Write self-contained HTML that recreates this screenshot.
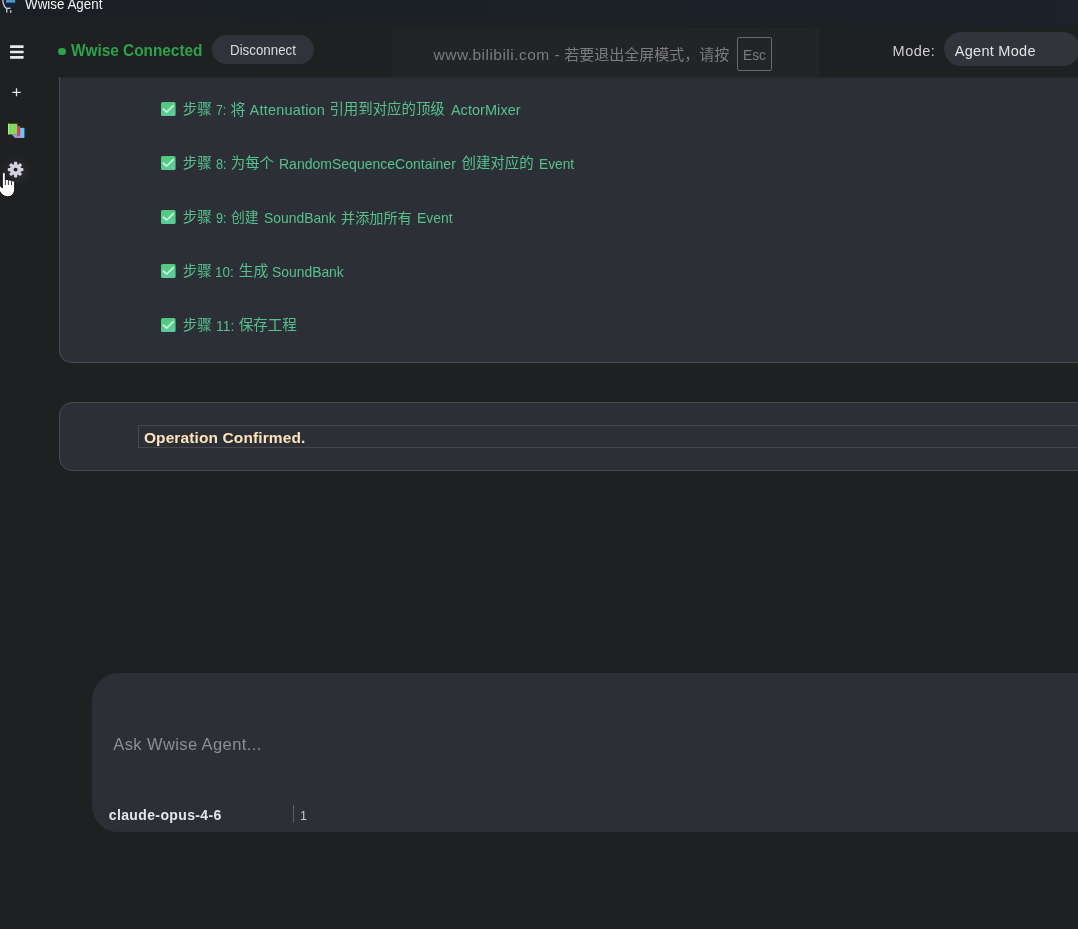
<!DOCTYPE html>
<html lang="zh">
<head>
<meta charset="utf-8">
<title>Wwise Agent</title>
<style>
html,body{margin:0;padding:0;}
html{overflow:hidden;background:#1f2022;}
body{width:1078px;height:929px;overflow:hidden;position:relative;background:#1f2022;
  font-family:"Liberation Sans","Noto Sans CJK SC",sans-serif;}
.a{position:absolute;display:block;}
.t{position:absolute;white-space:pre;line-height:1;font-weight:400;transform-origin:0 50%;}
#titlebar{left:0;top:0;width:1078px;height:40px;background:linear-gradient(to right,#1b1f24 0,#1b2026 35%,#1b2229 100%);}
#tbfade{left:0;top:0;width:1078px;height:40px;background:linear-gradient(180.43deg,rgba(31,32,34,0) 0,rgba(31,32,34,0) 47%,rgba(31,32,34,.6) 57%,#1f2022 67%);}
#overlay{left:392px;top:28px;width:427px;height:49px;background:#232428;}
#esc{left:737px;top:37px;width:35px;height:34px;border:1px solid #67686b;border-radius:2px;box-sizing:border-box;}
#disc{left:212px;top:35px;width:101.5px;height:29px;border-radius:14.5px;background:#30333a;}
#mode{left:944px;top:32px;width:136px;height:34px;border-radius:17px;background:#31343a;}
#dot{left:58.3px;top:47.5px;width:7.4px;height:7.4px;border-radius:50%;background:#2da24c;}
#p1{left:59px;top:77px;width:1060px;height:286px;background:#2c2f35;border:1px solid #484b51;border-top:none;
  border-radius:0 0 0 13px;box-sizing:border-box;}
#p2{left:59px;top:402.4px;width:1060px;height:68.6px;background:#2c2f35;border:1px solid #484b51;
  border-radius:13px 0 0 13px;box-sizing:border-box;}
#p2in{left:138px;top:424.8px;width:980px;height:23.6px;border:1px solid #45484e;box-sizing:border-box;background:#2c2f35;}
#inp{left:92px;top:672.5px;width:1040px;height:159.5px;background:#2c2f36;border-radius:27px 0 0 26px;}
#p1sh{left:60px;top:77px;width:1018px;height:3px;background:linear-gradient(rgba(31,32,34,.5),rgba(31,32,34,0));}
#sep{left:293.4px;top:805px;width:1px;height:18px;background:#5b5e64;}
#txt{left:0;top:0;width:1078px;height:929px;will-change:transform;}
#hov{left:1px;top:155px;width:31px;height:32px;background:radial-gradient(closest-side,#28292d 0,#26272b 55%,rgba(31,32,34,0) 100%);}
</style>
</head>
<body>
<svg class="a" width="0" height="0"><defs>
<linearGradient id="cg" x1="0" y1="0" x2="0.25" y2="1"><stop offset="0" stop-color="#50c878"/><stop offset="1" stop-color="#5ccb9b"/></linearGradient>
</defs></svg>

<!-- window title bar -->
<div class="a" id="titlebar"></div>
<div class="a" id="tbfade"></div>
<svg class="a" style="left:0;top:0" width="18" height="15" viewBox="0 0 18 15">
  <rect x="6" y="0" width="9.2" height="2.8" fill="#4d94c8"/>
  <rect x="6.4" y="2.8" width="8.4" height="4" fill="#10243f"/>
  <path d="M2.7 -1 C3 4 4.2 7 6.6 8.4 L10 8.2" fill="none" stroke="#c6c7d1" stroke-width="1.4" stroke-linecap="round"/>
  <path d="M6.7 8.6 L6.8 12" fill="none" stroke="#c6c7d1" stroke-width="1.4" stroke-linecap="round"/>
  <path d="M10.7 10.8 V12.2" fill="none" stroke="#b9bac4" stroke-width="1.5" stroke-linecap="round"/>
</svg>

<!-- header controls -->
<div class="a" id="overlay"></div>
<div class="a" id="esc"></div>
<div class="a" id="disc"></div>
<div class="a" id="mode"></div>
<div class="a" id="dot"></div>

<!-- sidebar -->
<svg class="a" style="left:10px;top:45px" width="14" height="14.4" viewBox="0 0 14 14.4">
  <rect x="0" y="0.3" width="13.6" height="2.6" rx="0.5" fill="#e8e8ea"/>
  <rect x="0" y="5.7" width="13.6" height="2.6" rx="0.5" fill="#e8e8ea"/>
  <rect x="0" y="11.1" width="13.6" height="2.6" rx="0.5" fill="#e8e8ea"/>
</svg>
<svg class="a" style="left:11px;top:87px" width="11" height="11" viewBox="0 0 11 11">
  <path d="M5.5 1.3 V9.3 M1.3 5.3 H9.7" stroke="#e4e4e6" stroke-width="1.3" fill="none"/>
</svg>
<!-- books -->
<svg class="a" style="left:6px;top:121px" width="22" height="19" viewBox="6 121 22 19">
  <path d="M11.5 134.3 L24.4 134.3 L24.4 138 L15 138 Z" fill="#a58fd8"/>
  <rect x="24" y="127.6" width="1.5" height="10.4" fill="#0b2b55"/>
  <rect x="20" y="127.8" width="4.4" height="9.6" fill="#6ec6f0"/>
  <rect x="17.2" y="126" width="3" height="9.8" fill="#d93d5e"/>
  <rect x="8" y="123.7" width="9.3" height="10.7" fill="#86d75e"/>
  <rect x="8" y="123.7" width="0.9" height="10.7" fill="#bfe6a0"/>
</svg>
<!-- settings (hovered) -->
<div class="a" id="hov"></div>
<svg class="a" style="left:7.4px;top:161.4px" width="17.2" height="17.2" viewBox="-9 -9 18 18">
  <g fill="#d3d1de">
    <circle r="5.9"/>
    <g id="teeth">
      <rect x="-1.7" y="-8.2" width="3.4" height="4" rx="1"/>
      <rect x="-1.7" y="-8.2" width="3.4" height="4" rx="1" transform="rotate(45)"/>
      <rect x="-1.7" y="-8.2" width="3.4" height="4" rx="1" transform="rotate(90)"/>
      <rect x="-1.7" y="-8.2" width="3.4" height="4" rx="1" transform="rotate(135)"/>
      <rect x="-1.7" y="-8.2" width="3.4" height="4" rx="1" transform="rotate(180)"/>
      <rect x="-1.7" y="-8.2" width="3.4" height="4" rx="1" transform="rotate(225)"/>
      <rect x="-1.7" y="-8.2" width="3.4" height="4" rx="1" transform="rotate(270)"/>
      <rect x="-1.7" y="-8.2" width="3.4" height="4" rx="1" transform="rotate(315)"/>
    </g>
  </g>
  <circle r="2" fill="#1d1b2c"/>
</svg>

<!-- conversation panels -->
<div class="a" id="p1"></div>
<div class="a" id="p1sh"></div>
<div class="a" id="p2"></div>
<div class="a" id="p2in"></div>
<div class="a" id="inp"></div>
<div class="a" id="sep"></div>

<div class="a" id="txt">
<svg class="a" style="left:161.2px;top:102.3px" width="14.6" height="14" viewBox="0 0 14.6 14"><rect width="14.6" height="14" rx="1.6" fill="url(#cg)"/><path d="M2.3 7.1 L5.8 10.0 L12.3 3.6" fill="none" stroke="#c8f7dc" stroke-width="1.7" stroke-linecap="round" stroke-linejoin="round"/></svg>
<svg class="a" style="left:161.2px;top:156.3px" width="14.6" height="14" viewBox="0 0 14.6 14"><rect width="14.6" height="14" rx="1.6" fill="url(#cg)"/><path d="M2.3 7.1 L5.8 10.0 L12.3 3.6" fill="none" stroke="#c8f7dc" stroke-width="1.7" stroke-linecap="round" stroke-linejoin="round"/></svg>
<svg class="a" style="left:161.2px;top:210.3px" width="14.6" height="14" viewBox="0 0 14.6 14"><rect width="14.6" height="14" rx="1.6" fill="url(#cg)"/><path d="M2.3 7.1 L5.8 10.0 L12.3 3.6" fill="none" stroke="#c8f7dc" stroke-width="1.7" stroke-linecap="round" stroke-linejoin="round"/></svg>
<svg class="a" style="left:161.2px;top:264.3px" width="14.6" height="14" viewBox="0 0 14.6 14"><rect width="14.6" height="14" rx="1.6" fill="url(#cg)"/><path d="M2.3 7.1 L5.8 10.0 L12.3 3.6" fill="none" stroke="#c8f7dc" stroke-width="1.7" stroke-linecap="round" stroke-linejoin="round"/></svg>
<svg class="a" style="left:161.2px;top:318.3px" width="14.6" height="14" viewBox="0 0 14.6 14"><rect width="14.6" height="14" rx="1.6" fill="url(#cg)"/><path d="M2.3 7.1 L5.8 10.0 L12.3 3.6" fill="none" stroke="#c8f7dc" stroke-width="1.7" stroke-linecap="round" stroke-linejoin="round"/></svg>
<span class="t" style="top:-3.27px;font-size:14.5px;color:#f3f4f6;left:24.60px;transform:scaleX(0.9233);">Wwise Agent</span>
<span class="t" style="top:43.13px;font-size:14.5px;color:#dcdcde;left:229.58px;transform:scaleX(0.9194);">Disconnect</span>
<span class="t" style="top:43.46px;font-size:16.0px;color:#2da24c;font-weight:700;left:71.30px;transform:scaleX(0.9601);">Wwise Connected</span>
<span class="t" style="top:43.53px;font-size:14.5px;color:#cfcfd1;left:892.60px;letter-spacing:0.482px;">Mode:</span>
<span class="t" style="top:43.53px;font-size:14.5px;color:#e2e2e4;left:954.80px;letter-spacing:0.275px;">Agent Mode</span>
<span class="t" style="top:46.88px;font-size:15.5px;color:#7b7c80;left:433.60px;letter-spacing:0.473px;">www.bilibili.com</span>
<span class="t" style="top:47.48px;font-size:15.5px;color:#7b7c80;left:554.60px;">-</span>
<span class="t" style="top:46.90px;font-size:15px;color:#7b7c80;left:564.35px;">若要退出全屏模式，请按</span>
<span class="t" style="top:46.88px;font-size:15.5px;color:#7b7c80;left:742.91px;transform:scaleX(0.8889);">Esc</span>
<span class="t" style="top:102.33px;font-size:14.49px;color:#56c08f;left:182.66px;">步骤</span>
<span class="t" style="top:102.73px;font-size:14.5px;color:#56c08f;left:216.20px;transform:scaleX(0.8405);">7:</span>
<span class="t" style="top:101.82px;font-size:15.1px;color:#56c08f;left:230.55px;">将</span>
<span class="t" style="top:102.73px;font-size:14.5px;color:#56c08f;left:249.60px;letter-spacing:0.190px;">Attenuation</span>
<span class="t" style="top:102.39px;font-size:14.42px;color:#56c08f;left:329.46px;">引用到对应的顶级</span>
<span class="t" style="top:102.73px;font-size:14.5px;color:#56c08f;left:450.90px;letter-spacing:0.049px;">ActorMixer</span>
<span class="t" style="top:156.33px;font-size:14.49px;color:#56c08f;left:182.66px;">步骤</span>
<span class="t" style="top:156.73px;font-size:14.5px;color:#56c08f;left:216.40px;transform:scaleX(0.8767);">8:</span>
<span class="t" style="top:156.44px;font-size:14.36px;color:#56c08f;left:230.86px;">为每个</span>
<span class="t" style="top:156.73px;font-size:14.5px;color:#56c08f;left:278.73px;transform:scaleX(0.9662);">RandomSequenceContainer</span>
<span class="t" style="top:156.36px;font-size:14.46px;color:#56c08f;left:461.46px;">创建对应的</span>
<span class="t" style="top:156.73px;font-size:14.5px;color:#56c08f;left:538.55px;transform:scaleX(0.9459);">Event</span>
<span class="t" style="top:210.33px;font-size:14.49px;color:#56c08f;left:182.66px;">步骤</span>
<span class="t" style="top:210.73px;font-size:14.5px;color:#56c08f;left:216.30px;transform:scaleX(0.8767);">9:</span>
<span class="t" style="top:210.93px;font-size:13.79px;color:#56c08f;left:231.06px;">创建</span>
<span class="t" style="top:210.73px;font-size:14.5px;color:#56c08f;left:264.30px;transform:scaleX(0.9574);">SoundBank</span>
<span class="t" style="top:210.58px;font-size:14.2px;color:#56c08f;left:340.96px;">并添加所有</span>
<span class="t" style="top:210.73px;font-size:14.5px;color:#56c08f;left:417.24px;transform:scaleX(0.9570);">Event</span>
<span class="t" style="top:264.33px;font-size:14.49px;color:#56c08f;left:182.66px;">步骤</span>
<span class="t" style="top:264.73px;font-size:14.5px;color:#56c08f;left:215.47px;transform:scaleX(0.9322);">10:</span>
<span class="t" style="top:264.11px;font-size:14.75px;color:#56c08f;left:238.65px;">生成</span>
<span class="t" style="top:264.73px;font-size:14.5px;color:#56c08f;left:271.90px;transform:scaleX(0.9574);">SoundBank</span>
<span class="t" style="top:318.33px;font-size:14.49px;color:#56c08f;left:182.66px;">步骤</span>
<span class="t" style="top:318.73px;font-size:14.5px;color:#56c08f;left:216.04px;transform:scaleX(0.9559);">11:</span>
<span class="t" style="top:318.27px;font-size:14.57px;color:#56c08f;left:238.65px;">保存工程</span>
<span class="t" style="top:429.98px;font-size:15.5px;color:#fce3bb;font-weight:700;left:143.90px;letter-spacing:0.110px;">Operation Confirmed.</span>
<span class="t" style="top:736.03px;font-size:16.5px;color:#8b8e94;left:113.30px;letter-spacing:0.397px;">Ask Wwise Agent...</span>
<span class="t" style="top:808.15px;font-size:14.0px;color:#e6e6e8;font-weight:700;left:108.80px;letter-spacing:0.367px;">claude-opus-4-6</span>
<span class="t" style="top:810.42px;font-size:12.5px;color:#c9c9cb;left:300.00px;">1</span>
</div>

<!-- mouse pointer (hand) -->
<svg class="a" style="left:-4px;top:170px" width="21" height="29" viewBox="-4 170 21 29">
  <path d="M2.3 174.2 C2.3 172 5.3 172 5.3 174.2 L5.3 180 C5.8 179 8.2 179.1 8.4 180.4 C9 179.5 11.4 179.8 11.5 181.1 C12.3 180.5 14.6 180.9 14.7 182.6 L14.7 188.6 C14.7 193.4 12 196.7 7.7 196.7 C3.6 196.7 1.4 194.4 -0.7 190.8 L-3.6 186 C-4.4 184.4 -2.4 183.2 -1.1 184.5 L2.3 187.9 Z"
        fill="#ffffff" stroke="#0b0b0c" stroke-width="1" stroke-linejoin="round"/>
  <path d="M5.4 180.2 V185 M8.4 180.8 V185 M11.5 181.4 V185" stroke="#0b0b0c" stroke-width="0.8" fill="none"/>
</svg>
</body>
</html>
